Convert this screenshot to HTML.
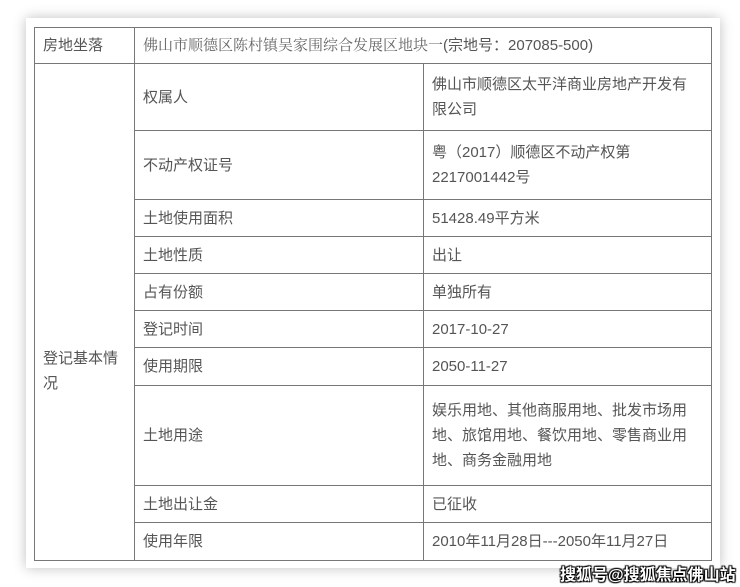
<html><head><style>
body{margin:0;width:740px;height:587px;background:#fff;overflow:hidden;position:relative;font-family:"Liberation Sans","Noto Sans CJK SC",sans-serif;}
.card{position:absolute;left:26px;top:18px;width:694px;height:550px;background:#fff;box-shadow:0 0 12px rgba(0,0,0,0.25);}
table{position:absolute;left:34px;top:27px;border-collapse:collapse;font-size:15px;color:#555;}
td{border:1.5px solid #777;padding:0 12px 0 8px;vertical-align:middle;line-height:25px;}
.serif{font-family:"Liberation Serif","Noto Serif CJK SC",serif;color:#666;}
.wm{position:absolute;left:560px;top:561px;font-size:16px;font-weight:bold;color:#fff;text-shadow:0 0 1px #000,1px 1px 1px #000,-1px -1px 1px #000,1px -1px 1px #000,-1px 1px 1px #000;}
</style></head><body>
<div class="card"></div>
<table>
<colgroup><col style="width:100px"><col style="width:289px"><col style="width:288px"></colgroup>
<tr style="height:36px"><td>房地坐落</td><td colspan="2"><span class="serif">佛山市顺德区陈村镇吴家围综合发展区地块一</span>(宗地号：207085-500)</td></tr>
<tr style="height:67px"><td rowspan="10" style="padding-top:118px">登记基本情<br>况</td><td>权属人</td><td>佛山市顺德区太平洋商业房地产开发有限公司</td></tr>
<tr style="height:69px"><td>不动产权证号</td><td>粤（2017）顺德区不动产权第2217001442号</td></tr>
<tr style="height:37px"><td>土地使用面积</td><td>51428.49平方米</td></tr>
<tr style="height:37px"><td>土地性质</td><td>出让</td></tr>
<tr style="height:37px"><td>占有份额</td><td>单独所有</td></tr>
<tr style="height:37px"><td>登记时间</td><td>2017-10-27</td></tr>
<tr style="height:38px"><td>使用期限</td><td>2050-11-27</td></tr>
<tr style="height:100px"><td>土地用途</td><td>娱乐用地、其他商服用地、批发市场用地、旅馆用地、餐饮用地、零售商业用地、商务金融用地</td></tr>
<tr style="height:37px"><td>土地出让金</td><td>已征收</td></tr>
<tr style="height:38px"><td>使用年限</td><td>2010年11月28日---2050年11月27日</td></tr>
</table>
<div class="wm">搜狐号@搜狐焦点佛山站</div>
</body></html>
